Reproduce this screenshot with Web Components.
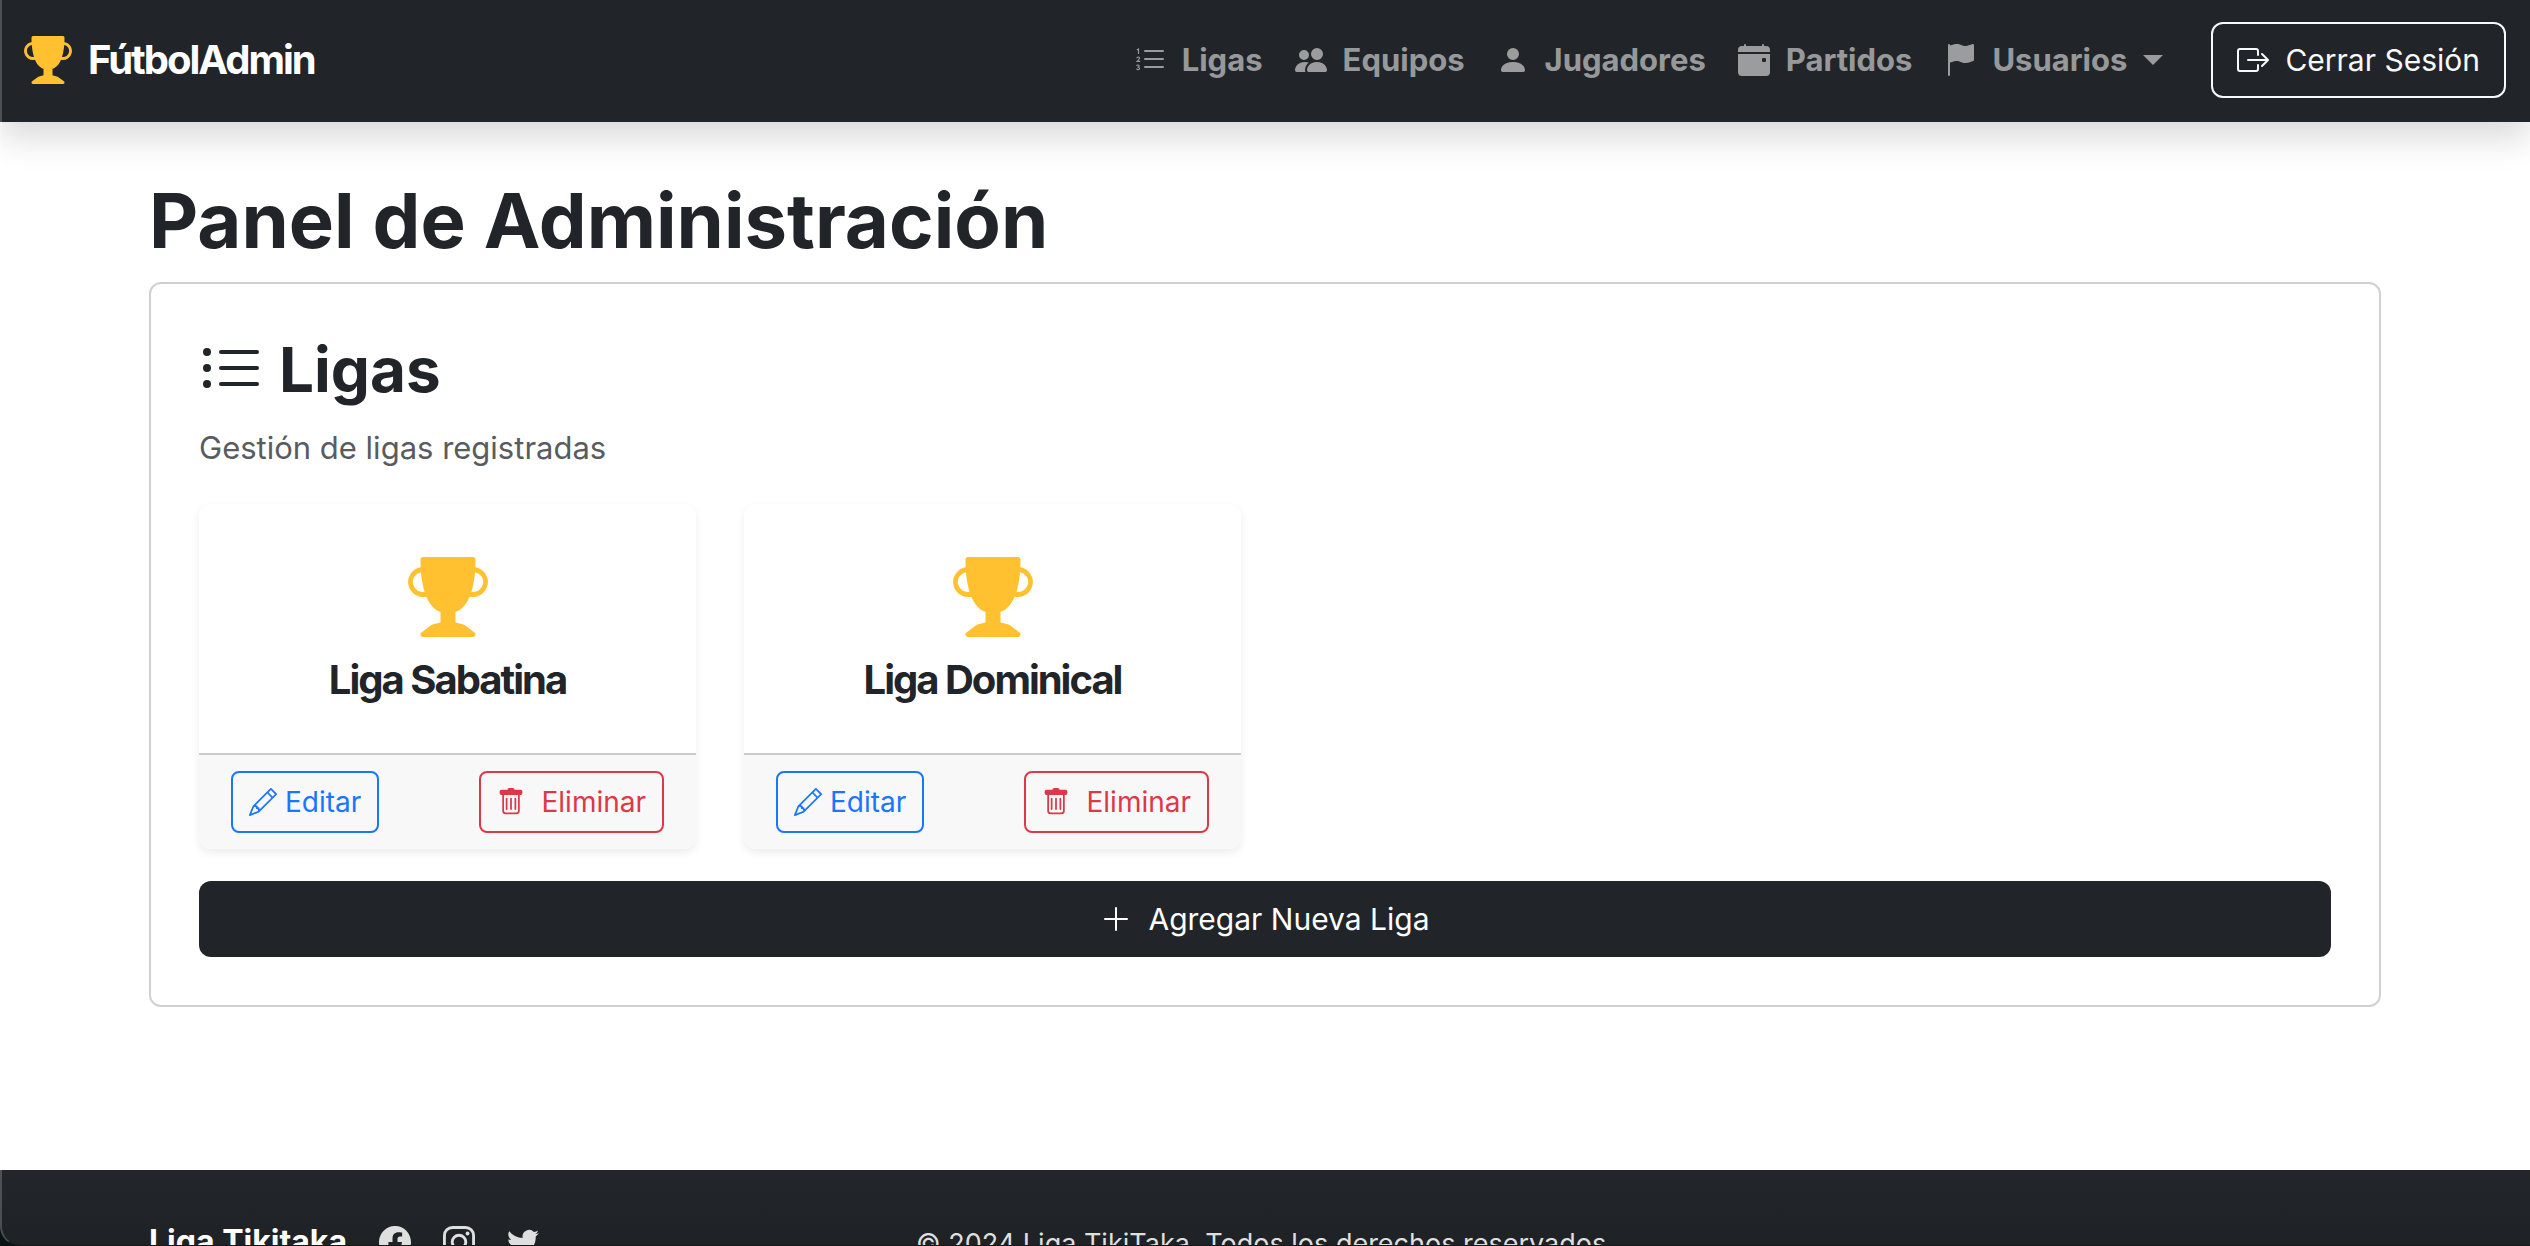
<!DOCTYPE html>
<html lang="es">
<head>
<meta charset="utf-8">
<meta name="viewport" content="width=device-width, initial-scale=1">
<title>FútbolAdmin</title>
<style>
  html, body { margin: 0; }
  body {
    background: #fff;
    color: #212529;
    font: 400 31px/48px Inter, "Liberation Sans", sans-serif;
  }
</style>
</head>
<body>
<futbol-app>
  <admin-navbar></admin-navbar>
  <admin-panel heading="Panel de Administración">
    <section-card icon="list-ul" heading="Ligas" text="Gestión de ligas registradas" action="Agregar Nueva Liga">
      <league-card>Liga Sabatina</league-card>
      <league-card>Liga Dominical</league-card>
    </section-card>
  </admin-panel>
  <site-footer></site-footer>
</futbol-app>

<script>
const LINES = '<path d="M5 11.5a.5.5 0 0 1 .5-.5h9a.5.5 0 0 1 0 1h-9a.5.5 0 0 1-.5-.5m0-4a.5.5 0 0 1 .5-.5h9a.5.5 0 0 1 0 1h-9a.5.5 0 0 1-.5-.5m0-4a.5.5 0 0 1 .5-.5h9a.5.5 0 0 1 0 1h-9a.5.5 0 0 1-.5-.5"/>';
const ICONS = {
  'trophy': '<path d="M2.5.5A.5.5 0 0 1 3 0h10a.5.5 0 0 1 .5.5q0 .807-.034 1.536a3 3 0 1 1-1.133 5.89c-.79 1.865-1.878 2.777-2.833 3.011v2.173l1.425.356c.194.048.377.135.537.255L13.3 15.1a.5.5 0 0 1-.3.9H3a.5.5 0 0 1-.3-.9l1.838-1.379c.16-.12.343-.207.537-.255L6.5 13.11v-2.173c-.955-.234-2.043-1.146-2.833-3.012a3 3 0 1 1-1.132-5.89A33 33 0 0 1 2.5.5m.099 2.54a2 2 0 0 0 .72 3.935c-.333-1.05-.588-2.346-.72-3.935m10.083 3.935a2 2 0 0 0 .72-3.935c-.133 1.59-.388 2.885-.72 3.935"/>',
  'list-ol': LINES + '<g fill="none" stroke="currentColor" stroke-width=".55"><path d="M1.4 3l.85-.5V5"/><path d="M1.4 7.1c0-.8 1.3-.8 1.3 0 0 .5-.6.9-1.2 1.6h1.6"/><path d="M1.3 10.9c.1-.5 1.3-.5 1.3.1 0 .5-.5.6-.9.6.5 0 1.1.1 1.1.7 0 .7-1.4.7-1.5 0"/></g>',
  'list-ul': LINES + '<circle cx="2" cy="3.5" r="1"/><circle cx="2" cy="7.5" r="1"/><circle cx="2" cy="11.5" r="1"/>',
  'people': '<path d="M7 14s-1 0-1-1 1-4 5-4 5 3 5 4-1 1-1 1zm4-6a3 3 0 1 0 0-6 3 3 0 0 0 0 6m-5.784 6A2.24 2.24 0 0 1 5 13c0-1.355.68-2.75 1.936-3.72A6.3 6.3 0 0 0 5 9c-4 0-5 3-5 4s1 1 1 1zM4.5 8a2.5 2.5 0 1 0 0-5 2.5 2.5 0 0 0 0 5"/>',
  'person': '<path d="M3 14s-1 0-1-1 1-4 6-4 6 3 6 4-1 1-1 1zm5-6a3 3 0 1 0 0-6 3 3 0 0 0 0 6"/>',
  'calendar': '<path d="M4 .5a.5.5 0 0 0-1 0V1H2a2 2 0 0 0-2 2v1h16V3a2 2 0 0 0-2-2h-1V.5a.5.5 0 0 0-1 0V1H4zM16 14V5H0v9a2 2 0 0 0 2 2h12a2 2 0 0 0 2-2m-3.5-7h1a.5.5 0 0 1 .5.5v1a.5.5 0 0 1-.5.5h-1a.5.5 0 0 1-.5-.5v-1a.5.5 0 0 1 .5-.5"/>',
  'flag': '<path d="M14.778.085A.5.5 0 0 1 15 .5V8a.5.5 0 0 1-.314.464L14.5 8l.186.464-.003.001-.006.003-.023.009a12 12 0 0 1-.397.15c-.264.095-.631.223-1.047.35-.816.252-1.879.523-2.71.523-.847 0-1.548-.28-2.158-.525l-.028-.01C7.68 8.71 7.14 8.5 6.5 8.5c-.7 0-1.638.23-2.437.477A20 20 0 0 0 3 9.342V15.5a.5.5 0 0 1-1 0V.5a.5.5 0 0 1 1 0v.282c.226-.079.496-.17.79-.26C4.606.272 5.67 0 6.5 0c.84 0 1.524.277 2.121.519l.043.018C9.286.788 9.828 1 10.5 1c.7 0 1.638-.23 2.437-.477a20 20 0 0 0 1.349-.476l.019-.007.004-.002h.001"/>',
  'exit': '<path d="M10 12.5a.5.5 0 0 1-.5.5h-8a.5.5 0 0 1-.5-.5v-9a.5.5 0 0 1 .5-.5h8a.5.5 0 0 1 .5.5v2a.5.5 0 0 0 1 0v-2A1.5 1.5 0 0 0 9.5 2h-8A1.5 1.5 0 0 0 0 3.5v9A1.5 1.5 0 0 0 1.5 14h8a1.5 1.5 0 0 0 1.5-1.5v-2a.5.5 0 0 0-1 0z"/><path d="M15.854 8.354a.5.5 0 0 0 0-.708l-3-3a.5.5 0 0 0-.708.708L14.293 7.5H5.5a.5.5 0 0 0 0 1h8.793l-2.147 2.146a.5.5 0 0 0 .708.708z"/>',
  'pencil': '<path d="M12.146.146a.5.5 0 0 1 .708 0l3 3a.5.5 0 0 1 0 .708l-10 10a.5.5 0 0 1-.168.11l-5 2a.5.5 0 0 1-.65-.65l2-5a.5.5 0 0 1 .11-.168zM11.207 2.5 13.5 4.793 14.793 3.5 12.5 1.207zm1.586 3L10.5 3.207 4 9.707V10h.5a.5.5 0 0 1 .5.5v.5h.5a.5.5 0 0 1 .5.5v.5h.293zm-9.761 5.175-.106.106-1.528 3.821 3.821-1.528.106-.106A.5.5 0 0 1 5 12.5V12h-.5a.5.5 0 0 1-.5-.5V11h-.5a.5.5 0 0 1-.468-.325"/>',
  'trash': '<path d="M5.5 5.5A.5.5 0 0 1 6 6v6a.5.5 0 0 1-1 0V6a.5.5 0 0 1 .5-.5m2.5 0a.5.5 0 0 1 .5.5v6a.5.5 0 0 1-1 0V6a.5.5 0 0 1 .5-.5m3 .5a.5.5 0 0 0-1 0v6a.5.5 0 0 0 1 0z"/><path d="M14.5 3a1 1 0 0 1-1 1H13v9a2 2 0 0 1-2 2H5a2 2 0 0 1-2-2V4h-.5a1 1 0 0 1-1-1V2a1 1 0 0 1 1-1H6a1 1 0 0 1 1-1h2a1 1 0 0 1 1 1h3.5a1 1 0 0 1 1 1zM4.118 4 4 4.059V13a1 1 0 0 0 1 1h6a1 1 0 0 0 1-1V4.059L11.882 4z"/>',
  'plus': '<path d="M8 2a.5.5 0 0 1 .5.5v5h5a.5.5 0 0 1 0 1h-5v5a.5.5 0 0 1-1 0v-5h-5a.5.5 0 0 1 0-1h5v-5A.5.5 0 0 1 8 2"/>',
  'facebook': '<path d="M16 8.049c0-4.446-3.582-8.05-8-8.05C3.58 0-.002 3.603-.002 8.05c0 4.017 2.926 7.347 6.75 7.951v-5.625h-2.03V8.05H6.75V6.275c0-2.017 1.195-3.131 3.022-3.131.876 0 1.791.157 1.791.157v1.98h-1.009c-.993 0-1.303.621-1.303 1.258v1.51h2.218l-.354 2.326H9.25V16c3.824-.604 6.75-3.934 6.75-7.951"/>',
  'instagram': '<g fill="none" stroke="currentColor" stroke-width="1.44"><rect x=".72" y=".72" width="14.56" height="14.56" rx="4"/><circle cx="8" cy="8" r="3.4"/></g><circle cx="12.27" cy="3.73" r=".96"/>',
  'twitter': '<path d="M5.026 15c6.038 0 9.341-5.003 9.341-9.334q.002-.211-.006-.422A6.7 6.7 0 0 0 16 3.542a6.7 6.7 0 0 1-1.889.518 3.3 3.3 0 0 0 1.447-1.817 6.5 6.5 0 0 1-2.087.793A3.286 3.286 0 0 0 7.875 6.03a9.32 9.32 0 0 1-6.767-3.429 3.29 3.29 0 0 0 1.018 4.382A3.3 3.3 0 0 1 .64 6.575v.045a3.29 3.29 0 0 0 2.632 3.218 3.2 3.2 0 0 1-.865.115 3 3 0 0 1-.614-.057 3.28 3.28 0 0 0 3.067 2.277A6.6 6.6 0 0 1 .78 13.58a6 6 0 0 1-.78-.045A9.34 9.34 0 0 0 5.026 15"/>'
};

const define = (name, render) => customElements.define(name, class extends HTMLElement {
  constructor() {
    super();
    this.attachShadow({ mode: 'open' });
  }
  connectedCallback() {
    this.shadowRoot.innerHTML = render(this);
  }
});

define('bi-icon', el => `
  <style>
    :host { display: block; flex: none; width: var(--icon-size, 32px); height: var(--icon-size, 32px); }
    svg { display: block; width: 100%; height: 100%; }
  </style>
  <svg viewBox="0 0 16 16" fill="currentColor" aria-hidden="true">${ICONS[el.getAttribute('name')]}</svg>`);

define('futbol-app', () => `
  <style>
    :host { display: flex; flex-direction: column; height: 100vh; overflow: hidden; }
    .frame {
      position: fixed; inset: 0; z-index: 5; pointer-events: none;
      border-left: 2px solid rgba(255, 255, 255, .2);
      border-bottom: 1px solid #15181a;
      border-bottom-left-radius: 20px;
      box-shadow: 0 0 0 24px #071413;
    }
  </style>
  <slot></slot>
  <div class="frame"></div>`);

define('nav-item', el => `
  <style>
    :host { display: block; }
    a, button {
      display: flex; align-items: center; gap: 16px; padding: 0 16px; margin: 0;
      border: 0; background: none; color: rgba(255, 255, 255, .55);
      font: 700 31px/48px Inter, sans-serif; text-decoration: none; cursor: pointer;
    }
    .caret { border: 10px solid transparent; border-top-color: currentColor; border-bottom: 0; }
  </style>
  ${el.hasAttribute('menu')
    ? `<button type="button" aria-haspopup="true"><bi-icon name="${el.getAttribute('icon')}"></bi-icon><slot></slot><span class="caret"></span></button>`
    : `<a href="#"><bi-icon name="${el.getAttribute('icon')}"></bi-icon><slot></slot></a>`}`);

define('admin-navbar', () => `
  <style>
    :host { display: block; position: relative; z-index: 1; flex: none; background: #212529; box-shadow: 0 16px 32px rgba(0, 0, 0, .15); }
    header, nav, .brand, .logout { display: flex; align-items: center; }
    header { justify-content: space-between; padding: 22px 24px 24px; }
    .brand { gap: 16px; color: #fff; font-size: 40px; font-weight: 700; letter-spacing: -2px; text-decoration: none; }
    .brand bi-icon { --icon-size: 48px; color: #ffc12f; }
    .logout {
      gap: 16px; margin-left: 32px; padding: 12px 24px; border: 2px solid #f8f9fa; border-radius: 12px;
      background: none; color: #f8f9fa; font: inherit; font-size: 30px; cursor: pointer;
    }
  </style>
  <header>
    <a class="brand" href="#"><bi-icon name="trophy"></bi-icon>FútbolAdmin</a>
    <nav>
      <nav-item icon="list-ol">Ligas</nav-item>
      <nav-item icon="people">Equipos</nav-item>
      <nav-item icon="person">Jugadores</nav-item>
      <nav-item icon="calendar">Partidos</nav-item>
      <nav-item icon="flag" menu>Usuarios</nav-item>
      <button class="logout" type="button"><bi-icon name="exit"></bi-icon>Cerrar Sesión</button>
    </nav>
  </header>`);

define('admin-panel', el => `
  <style>
    :host { display: block; flex: none; box-sizing: border-box; width: 100%; max-width: 2280px; margin: 0 auto; padding: 48px 24px 163px; }
    h1 { margin: 0 0 12px; font-size: 76px; line-height: 100px; font-weight: 700; }
  </style>
  <main><h1>${el.getAttribute('heading')}</h1><slot></slot></main>`);

define('section-card', el => `
  <style>
    :host { display: block; padding: 48px; border: 2px solid #d0d0d0; border-radius: 12px; }
    h2 { display: flex; align-items: center; gap: 16px; margin: 0 0 16px; font-size: 62px; line-height: 76px; font-weight: 700; }
    h2 bi-icon { --icon-size: 64px; }
    p { margin: 0 0 32px; color: #595c5f; }
    .grid { display: grid; grid-template-columns: repeat(4, 1fr); gap: 48px; margin-bottom: 32px; }
    button {
      display: flex; align-items: center; justify-content: center; gap: 16px; width: 100%; padding: 14px 24px;
      border: 0; border-radius: 12px; background: #212529; color: #fff; font: inherit; font-size: 30px; cursor: pointer;
    }
  </style>
  <h2><bi-icon name="${el.getAttribute('icon')}"></bi-icon>${el.getAttribute('heading')}</h2>
  <p>${el.getAttribute('text')}</p>
  <div class="grid"><slot></slot></div>
  <button type="button"><bi-icon name="plus"></bi-icon>${el.getAttribute('action')}</button>`);

define('league-card', () => `
  <style>
    :host { display: block; border-radius: 12px; background: #fff; box-shadow: 0 4px 8px rgba(0, 0, 0, .075); overflow: hidden; }
    .body { display: flex; flex-direction: column; align-items: center; gap: 16px; padding: 53px 32px 46px; }
    .body bi-icon { --icon-size: 80px; color: #ffc12f; }
    h3 { margin: 0; font-size: 40px; line-height: 54px; font-weight: 700; letter-spacing: -2px; }
    .actions { display: flex; justify-content: space-between; padding: 16px 32px; border-top: 2px solid #cbcbcb; background: #f8f8f8; }
    button {
      display: flex; align-items: center; padding: 8px 16px; border: 2px solid; border-radius: 8px;
      background: none; font: 400 28px/42px Inter, sans-serif; --icon-size: 28px; cursor: pointer;
    }
    .edit { gap: 8px; color: #1a75ff; }
    .delete { gap: 16px; color: #dc3848; }
  </style>
  <div class="body"><bi-icon name="trophy"></bi-icon><h3><slot></slot></h3></div>
  <div class="actions">
    <button class="edit" type="button"><bi-icon name="pencil"></bi-icon>Editar</button>
    <button class="delete" type="button"><bi-icon name="trash"></bi-icon>Eliminar</button>
  </div>`);

define('site-footer', () => `
  <style>
    :host { display: block; flex: none; background: linear-gradient(#23262a, #1f2225 76px); color: #fff; }
    footer { display: grid; grid-template-columns: 1fr auto 1fr; align-items: start; box-sizing: border-box; max-width: 2280px; margin: 0 auto; padding: 48px 24px; }
    .site { display: flex; align-items: center; gap: 32px; }
    .site strong { font-size: 32px; }
    .site a { color: #dedfdf; }
    small { padding-top: 2px; color: #dedfdf; font-size: 27px; }
  </style>
  <footer>
    <div class="site">
      <strong>Liga Tikitaka</strong>
      <a href="#" aria-label="Facebook"><bi-icon name="facebook"></bi-icon></a>
      <a href="#" aria-label="Instagram"><bi-icon name="instagram"></bi-icon></a>
      <a href="#" aria-label="Twitter"><bi-icon name="twitter"></bi-icon></a>
    </div>
    <small>© 2024 Liga TikiTaka. Todos los derechos reservados.</small>
  </footer>`);
</script>
</body>
</html>
